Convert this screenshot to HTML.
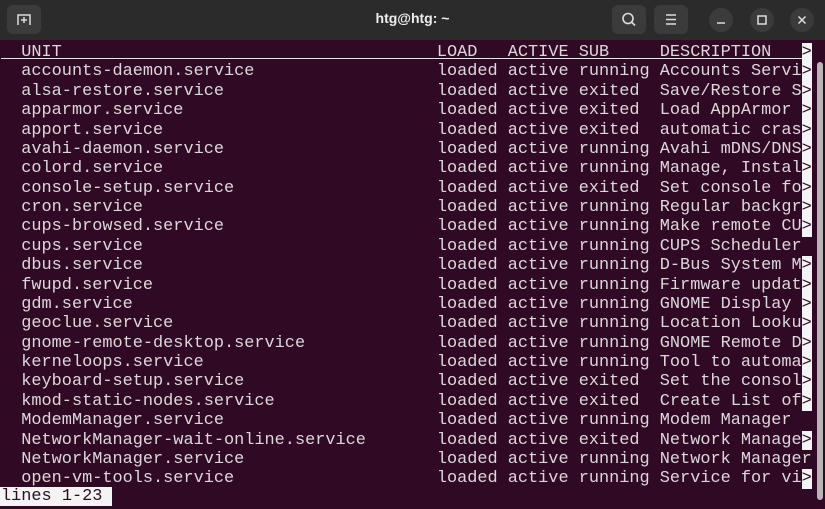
<!DOCTYPE html>
<html><head><meta charset="utf-8"><style>
body{margin:0;width:825px;height:509px;overflow:hidden;background:#300a24;font-family:"Liberation Mono",monospace}
.tb{position:absolute;left:0;top:0;width:825px;height:40px;background:#2b2b2b}
.btn{position:absolute;top:5px;width:34px;height:29px;background:#3b3b3b;border-radius:6px}
.c{position:absolute;top:8px;width:24px;height:24px;border-radius:50%;background:#3b3b3b}
.title{position:absolute;left:0;width:825px;top:10px;text-align:center;color:#eee;font:bold 14px "Liberation Sans",sans-serif}
.term{position:absolute;left:1px;top:43px;font-size:16.9px;line-height:19.38px;color:#dcd8da}
.r{height:19.38px;padding-left:2ch;display:flex;white-space:pre}
.r span{display:block;flex:none}
.u{width:41ch}.l{width:7ch}.a{width:7ch}.s{width:8ch}.d{width:14ch;overflow:hidden}
.g{background:#f4f4f4;color:#300a24;width:1ch}
.h{position:absolute;left:0;top:15px;width:79ch;border-top:1.5px solid #e8e4e6}
.st{position:absolute;left:0;top:487px;background:#f4f4f4;color:#300a24;font-size:16.9px;line-height:19px;padding:0 10px 0 1px;white-space:pre}
.sb{position:absolute;left:817px;top:62px;width:6px;height:438px;background:#b9b5b8;border-radius:3px}
</style></head><body>
<div class="tb">
<div class="btn" style="left:7px"><svg width="34" height="29"><path d="M11 20V10h12v10" fill="none" stroke="#ddd" stroke-width="1.5"/><path d="M17 12v6M14 15h6" stroke="#ddd" stroke-width="1.5"/></svg></div>
<div class="title">htg@htg: ~</div>
<div class="btn" style="left:612px"><svg width="34" height="29"><circle cx="16" cy="13.5" r="5" fill="none" stroke="#ddd" stroke-width="1.6"/><path d="M19.5 17l3.5 3.5" stroke="#ddd" stroke-width="1.6"/></svg></div>
<div class="btn" style="left:654px"><svg width="34" height="29"><path d="M12 10h10M12 14.5h10M12 19h10" stroke="#ddd" stroke-width="1.5"/></svg></div>
<div class="c" style="left:709px"><svg width="24" height="24"><path d="M8 15h8" stroke="#ddd" stroke-width="1.5"/></svg></div>
<div class="c" style="left:750px"><svg width="24" height="24"><rect x="8" y="8" width="8" height="8" fill="none" stroke="#ddd" stroke-width="1.5"/></svg></div>
<div class="c" style="left:790px"><svg width="24" height="24"><path d="M8.5 8.5l7 7M15.5 8.5l-7 7" stroke="#ddd" stroke-width="1.5"/></svg></div>
</div>
<div class="term">
<div class="h"></div>
<div class="r"><span class="u">UNIT</span><span class="l">LOAD</span><span class="a">ACTIVE</span><span class="s">SUB</span><span class="d">DESCRIPTION</span><span class="g">&gt;</span></div>
<div class="r"><span class="u">accounts-daemon.service</span><span class="l">loaded</span><span class="a">active</span><span class="s">running</span><span class="d">Accounts Servi</span><span class="g">&gt;</span></div>
<div class="r"><span class="u">alsa-restore.service</span><span class="l">loaded</span><span class="a">active</span><span class="s">exited</span><span class="d">Save/Restore S</span><span class="g">&gt;</span></div>
<div class="r"><span class="u">apparmor.service</span><span class="l">loaded</span><span class="a">active</span><span class="s">exited</span><span class="d">Load AppArmor </span><span class="g">&gt;</span></div>
<div class="r"><span class="u">apport.service</span><span class="l">loaded</span><span class="a">active</span><span class="s">exited</span><span class="d">automatic cras</span><span class="g">&gt;</span></div>
<div class="r"><span class="u">avahi-daemon.service</span><span class="l">loaded</span><span class="a">active</span><span class="s">running</span><span class="d">Avahi mDNS/DNS</span><span class="g">&gt;</span></div>
<div class="r"><span class="u">colord.service</span><span class="l">loaded</span><span class="a">active</span><span class="s">running</span><span class="d">Manage, Instal</span><span class="g">&gt;</span></div>
<div class="r"><span class="u">console-setup.service</span><span class="l">loaded</span><span class="a">active</span><span class="s">exited</span><span class="d">Set console fo</span><span class="g">&gt;</span></div>
<div class="r"><span class="u">cron.service</span><span class="l">loaded</span><span class="a">active</span><span class="s">running</span><span class="d">Regular backgr</span><span class="g">&gt;</span></div>
<div class="r"><span class="u">cups-browsed.service</span><span class="l">loaded</span><span class="a">active</span><span class="s">running</span><span class="d">Make remote CU</span><span class="g">&gt;</span></div>
<div class="r"><span class="u">cups.service</span><span class="l">loaded</span><span class="a">active</span><span class="s">running</span><span class="d">CUPS Scheduler</span></div>
<div class="r"><span class="u">dbus.service</span><span class="l">loaded</span><span class="a">active</span><span class="s">running</span><span class="d">D-Bus System M</span><span class="g">&gt;</span></div>
<div class="r"><span class="u">fwupd.service</span><span class="l">loaded</span><span class="a">active</span><span class="s">running</span><span class="d">Firmware updat</span><span class="g">&gt;</span></div>
<div class="r"><span class="u">gdm.service</span><span class="l">loaded</span><span class="a">active</span><span class="s">running</span><span class="d">GNOME Display </span><span class="g">&gt;</span></div>
<div class="r"><span class="u">geoclue.service</span><span class="l">loaded</span><span class="a">active</span><span class="s">running</span><span class="d">Location Looku</span><span class="g">&gt;</span></div>
<div class="r"><span class="u">gnome-remote-desktop.service</span><span class="l">loaded</span><span class="a">active</span><span class="s">running</span><span class="d">GNOME Remote D</span><span class="g">&gt;</span></div>
<div class="r"><span class="u">kerneloops.service</span><span class="l">loaded</span><span class="a">active</span><span class="s">running</span><span class="d">Tool to automa</span><span class="g">&gt;</span></div>
<div class="r"><span class="u">keyboard-setup.service</span><span class="l">loaded</span><span class="a">active</span><span class="s">exited</span><span class="d">Set the consol</span><span class="g">&gt;</span></div>
<div class="r"><span class="u">kmod-static-nodes.service</span><span class="l">loaded</span><span class="a">active</span><span class="s">exited</span><span class="d">Create List of</span><span class="g">&gt;</span></div>
<div class="r"><span class="u">ModemManager.service</span><span class="l">loaded</span><span class="a">active</span><span class="s">running</span><span class="d">Modem Manager</span></div>
<div class="r"><span class="u">NetworkManager-wait-online.service</span><span class="l">loaded</span><span class="a">active</span><span class="s">exited</span><span class="d">Network Manage</span><span class="g">&gt;</span></div>
<div class="r"><span class="u">NetworkManager.service</span><span class="l">loaded</span><span class="a">active</span><span class="s">running</span><span class="d" style="width:15ch">Network Manager</span></div>
<div class="r"><span class="u">open-vm-tools.service</span><span class="l">loaded</span><span class="a">active</span><span class="s">running</span><span class="d">Service for vi</span><span class="g">&gt;</span></div>
</div>
<div class="st">lines 1-23</div>
<div class="sb"></div>
</body></html>
